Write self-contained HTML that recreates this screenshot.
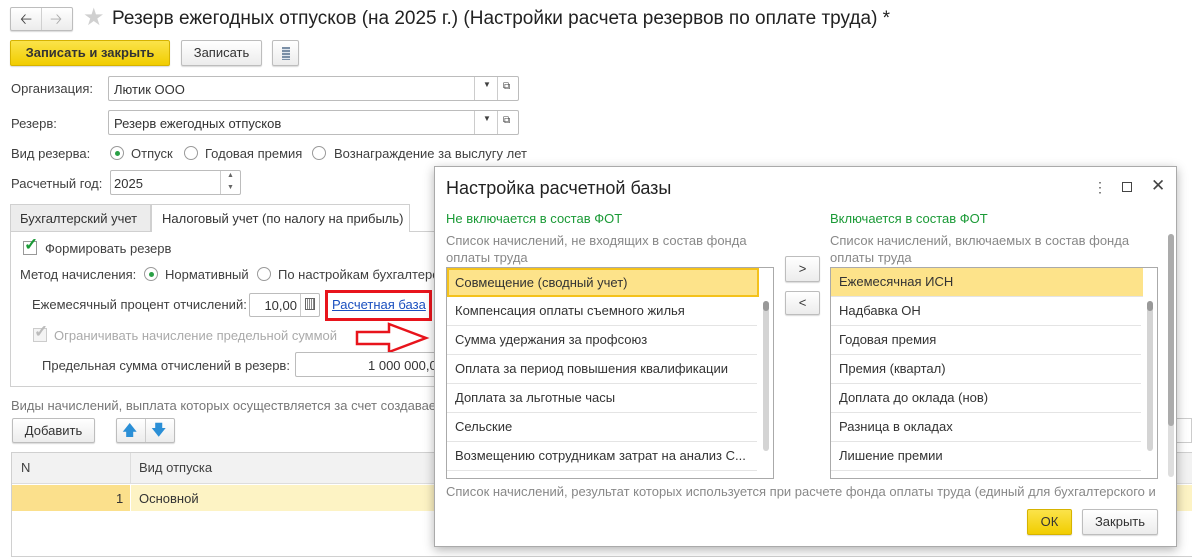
<!DOCTYPE html>
<html><head><meta charset="utf-8"><style>
*{box-sizing:border-box;margin:0;padding:0}
body{width:1192px;height:557px;background:#fff;position:relative;overflow:hidden;font-family:"Liberation Sans",Arial,sans-serif;font-size:13px;color:#404040}
.a{position:absolute;white-space:nowrap}
.btn{position:absolute;border:1px solid #bdbdbd;border-radius:2px;background:linear-gradient(#fff,#ececec);box-shadow:0 1px 1px rgba(0,0,0,.15);text-align:center;color:#333}
.fld{position:absolute;border:1px solid #bcbcbc;border-radius:2px;background:#fff;color:#333}
.rad{position:absolute;width:14px;height:14px;border:1px solid #9a9a9a;border-radius:50%;background:#fff}
.rad.on::after{content:"";position:absolute;left:3.5px;top:3.5px;width:5px;height:5px;border-radius:50%;background:#2aa046}
.row{position:absolute;left:0;width:310px;height:29px;border-bottom:1px solid #e4e4e4;padding-left:8px;line-height:28px;color:#333}
</style></head><body>
<!-- nav -->
<div class="btn" style="left:10px;top:7px;width:63px;height:24px"></div>
<div class="a" style="left:41px;top:8px;width:1px;height:22px;background:#d0d0d0"></div>
<div class="a" style="left:20px;top:9px;font-size:15px;color:#444">&#129120;</div>
<div class="a" style="left:50px;top:9px;font-size:15px;color:#aaa">&#129122;</div>
<div class="a" style="left:83px;top:3px;font-size:24px;color:#d0d0d0">★</div>
<div class="a" style="left:112px;top:8px;font-size:19px;color:#222">Резерв ежегодных отпусков (на 2025 г.) (Настройки расчета резервов по оплате труда) *</div>
<div class="btn" style="left:10px;top:40px;width:160px;height:26px;background:linear-gradient(#fbe34a,#f1cd00);border-color:#d6b300;font-weight:bold;line-height:24px;color:#333">Записать и закрыть</div>
<div class="btn" style="left:181px;top:40px;width:81px;height:26px;line-height:24px">Записать</div>
<div class="btn" style="left:272px;top:40px;width:27px;height:26px"><div style="margin:6px auto;width:8px;height:13px;background:repeating-linear-gradient(#7a8fa6 0 2px,#dfe6ee 2px 3px);"></div></div>
<!-- fields -->
<div class="a" style="left:11px;top:81px">Организация:</div>
<div class="fld" style="left:108px;top:76px;width:411px;height:25px;padding:5px 5px">Лютик ООО</div>
<div class="a" style="left:474px;top:77px;width:1px;height:23px;background:#ccc"></div><div class="a" style="left:497px;top:77px;width:1px;height:23px;background:#ccc"></div>
<div class="a" style="left:483px;top:80px;font-size:8px">▼</div><div class="a" style="left:503px;top:81px;font-size:10px">⧉</div>
<div class="a" style="left:11px;top:116px">Резерв:</div>
<div class="fld" style="left:108px;top:110px;width:411px;height:25px;padding:5px 5px">Резерв ежегодных отпусков</div>
<div class="a" style="left:474px;top:111px;width:1px;height:23px;background:#ccc"></div><div class="a" style="left:497px;top:111px;width:1px;height:23px;background:#ccc"></div>
<div class="a" style="left:483px;top:114px;font-size:8px">▼</div><div class="a" style="left:503px;top:115px;font-size:10px">⧉</div>
<div class="a" style="left:11px;top:146px">Вид резерва:</div>
<div class="rad on" style="left:110px;top:146px"></div><div class="a" style="left:131px;top:146px">Отпуск</div>
<div class="rad" style="left:184px;top:146px"></div><div class="a" style="left:205px;top:146px">Годовая премия</div>
<div class="rad" style="left:312px;top:146px"></div><div class="a" style="left:334px;top:146px">Вознаграждение за выслугу лет</div>
<div class="a" style="left:11px;top:176px">Расчетный год:</div>
<div class="fld" style="left:110px;top:170px;width:131px;height:25px;padding:5px 3px">2025</div>
<div class="a" style="left:220px;top:171px;width:1px;height:23px;background:#ccc"></div>
<div class="a" style="left:227px;top:172px;font-size:7px;color:#666">▲</div><div class="a" style="left:227px;top:184px;font-size:7px;color:#666">▼</div>
<!-- tabs -->
<div class="a" style="left:10px;top:204px;width:141px;height:28px;background:#ececec;border:1px solid #d0d0d0;padding:6px 9px;color:#333">Бухгалтерский учет</div>
<div class="a" style="left:151px;top:204px;width:259px;height:28px;background:#fff;border:1px solid #d0d0d0;border-bottom:none;padding:6px 10px;color:#333">Налоговый учет (по налогу на прибыль)</div>
<div class="a" style="left:10px;top:231px;width:430px;height:156px;border:1px solid #d0d0d0;border-top:none"></div>
<div class="a" style="left:410px;top:231px;width:30px;height:1px;background:#d0d0d0"></div>
<div class="a" style="left:23px;top:241px;width:14px;height:14px;border:1px solid #999;background:#fff"></div>
<div class="a" style="left:24px;top:235px;font-size:17px;color:#1a9a36;font-weight:bold">✓</div>
<div class="a" style="left:45px;top:241px">Формировать резерв</div>
<div class="a" style="left:20px;top:267px">Метод начисления:</div>
<div class="rad on" style="left:144px;top:267px"></div><div class="a" style="left:165px;top:267px">Нормативный</div>
<div class="rad" style="left:257px;top:267px"></div><div class="a" style="left:278px;top:267px">По настройкам бухгалтерс</div>
<div class="a" style="left:32px;top:297px">Ежемесячный процент отчислений:</div>
<div class="fld" style="left:249px;top:293px;width:71px;height:24px;text-align:right;padding:4px 22px 0 0">10,00</div>
<div class="a" style="left:300px;top:294px;width:1px;height:22px;background:#ccc"></div>
<div class="a" style="left:305px;top:298px;width:10px;height:12px;border:1px solid #666;background:repeating-linear-gradient(90deg,#fff 0 1px,#888 1px 2px)"></div>
<div class="a" style="left:325px;top:290px;width:107px;height:31px;border:3px solid #e8141c"></div>
<div class="a" style="left:332px;top:297px;color:#1a4fbf;text-decoration:underline">Расчетная база</div>
<svg class="a" style="left:355px;top:322px" width="75" height="32"><path d="M2 10 H34 V2 L71 16 L34 30 V22 H2 Z" fill="none" stroke="#e8141c" stroke-width="2.5"/></svg>
<div class="a" style="left:33px;top:328px;width:14px;height:14px;border:1px solid #ccc;background:#f4f4f4"></div>
<div class="a" style="left:34px;top:322px;font-size:17px;color:#bbb;font-weight:bold">✓</div>
<div class="a" style="left:54px;top:328px;color:#aaa">Ограничивать начисление предельной суммой</div>
<div class="a" style="left:42px;top:358px">Предельная сумма отчислений в резерв:</div>
<div class="fld" style="left:295px;top:352px;width:145px;height:25px;padding:5px 0 0 72px">1 000 000,0</div>
<div class="a" style="left:11px;top:398px;color:#777">Виды начислений, выплата которых осуществляется за счет создавае</div>
<div class="btn" style="left:12px;top:418px;width:83px;height:25px;line-height:23px">Добавить</div>
<div class="btn" style="left:116px;top:418px;width:59px;height:25px"></div>
<div class="a" style="left:145px;top:419px;width:1px;height:23px;background:#ccc"></div>
<div class="a" style="left:122px;top:420px;color:#2b8fd6;font-size:15px">🡅</div><div class="a" style="left:151px;top:420px;color:#2b8fd6;font-size:15px">🡇</div>
<div class="a" style="left:11px;top:452px;width:1181px;height:105px;border:1px solid #d0d0d0;border-right:none"></div>
<div class="a" style="left:12px;top:453px;width:1180px;height:31px;background:#f2f2f2;border-bottom:1px solid #ddd"></div>
<div class="a" style="left:130px;top:453px;width:1px;height:31px;background:#ddd"></div>
<div class="a" style="left:21px;top:460px">N</div><div class="a" style="left:139px;top:460px">Вид отпуска</div>
<div class="a" style="left:12px;top:485px;width:118px;height:26px;background:#fbe08c"></div>
<div class="a" style="left:131px;top:485px;width:1061px;height:26px;background:#fdf3c4"></div>
<div class="a" style="left:116px;top:491px;color:#333">1</div><div class="a" style="left:139px;top:491px;color:#333">Основной</div>
<div class="a" style="left:1172px;top:418px;width:20px;height:25px;border:1px solid #ccc;background:#fff"></div>
<!-- dialog -->
<div class="a" style="left:434px;top:166px;width:743px;height:381px;background:#fff;border:1px solid #aaa;box-shadow:0 3px 10px rgba(0,0,0,.3)">
<div class="a" style="left:11px;top:11px;font-size:18px;color:#222">Настройка расчетной базы</div>
<div class="a" style="left:658px;top:12px;font-size:14px;color:#555">⋮</div>
<div class="a" style="left:687px;top:15px;width:10px;height:10px;border:1.5px solid #444"></div>
<div class="a" style="left:716px;top:9px;font-size:17px;color:#444">✕</div>
<div class="a" style="left:11px;top:44px;color:#1a9a36">Не включается в состав ФОТ</div>
<div class="a" style="left:11px;top:65px;color:#888;line-height:17px">Список начислений, не входящих в состав фонда<br>оплаты труда</div>
<div class="a" style="left:395px;top:44px;color:#1a9a36">Включается в состав ФОТ</div>
<div class="a" style="left:395px;top:65px;color:#888;line-height:17px">Список начислений, включаемых в состав фонда<br>оплаты труда</div>
<div class="a" style="left:11px;top:100px;width:328px;height:212px;border:1px solid #aaa;overflow:hidden">
 <div class="row" style="top:0;background:#fde38a;border:2px solid #f4c21c;width:312px;padding-left:6px;line-height:25px">Совмещение (сводный учет)</div>
 <div class="row" style="top:29px">Компенсация оплаты съемного жилья</div>
 <div class="row" style="top:58px">Сумма удержания за профсоюз</div>
 <div class="row" style="top:87px">Оплата за период повышения квалификации</div>
 <div class="row" style="top:116px">Доплата за льготные часы</div>
 <div class="row" style="top:145px">Сельские</div>
 <div class="row" style="top:174px">Возмещению сотрудникам затрат на анализ С...</div>
 <div class="a" style="left:316px;top:33px;width:6px;height:150px;border-radius:3px;background:#d4d4d4"></div>
 <div class="a" style="left:316px;top:33px;width:6px;height:10px;border-radius:3px;background:#999"></div>
</div>
<div class="btn" style="left:350px;top:89px;width:35px;height:26px;line-height:24px">&gt;</div>
<div class="btn" style="left:350px;top:124px;width:35px;height:24px;line-height:22px">&lt;</div>
<div class="a" style="left:395px;top:100px;width:328px;height:212px;border:1px solid #aaa;overflow:hidden">
 <div class="row" style="top:0;background:#fde38a;width:312px">Ежемесячная ИСН</div>
 <div class="row" style="top:29px">Надбавка ОН</div>
 <div class="row" style="top:58px">Годовая премия</div>
 <div class="row" style="top:87px">Премия (квартал)</div>
 <div class="row" style="top:116px">Доплата до оклада (нов)</div>
 <div class="row" style="top:145px">Разница в окладах</div>
 <div class="row" style="top:174px">Лишение премии</div>
 <div class="a" style="left:316px;top:33px;width:6px;height:150px;border-radius:3px;background:#d4d4d4"></div>
 <div class="a" style="left:316px;top:33px;width:6px;height:10px;border-radius:3px;background:#999"></div>
</div>
<div class="a" style="left:733px;top:67px;width:6px;height:243px;border-radius:3px;background:#dedede"></div>
<div class="a" style="left:733px;top:67px;width:6px;height:192px;border-radius:3px;background:#ababab"></div>
<div class="a" style="left:11px;top:317px;color:#888">Список начислений, результат которых используется при расчете фонда оплаты труда (единый для бухгалтерского и</div>
<div class="btn" style="left:592px;top:342px;width:45px;height:26px;line-height:24px;background:linear-gradient(#fbe34a,#f1cd00);border-color:#d6b300;color:#333">ОК</div>
<div class="btn" style="left:647px;top:342px;width:76px;height:26px;line-height:24px">Закрыть</div>
</div>
</body></html>
